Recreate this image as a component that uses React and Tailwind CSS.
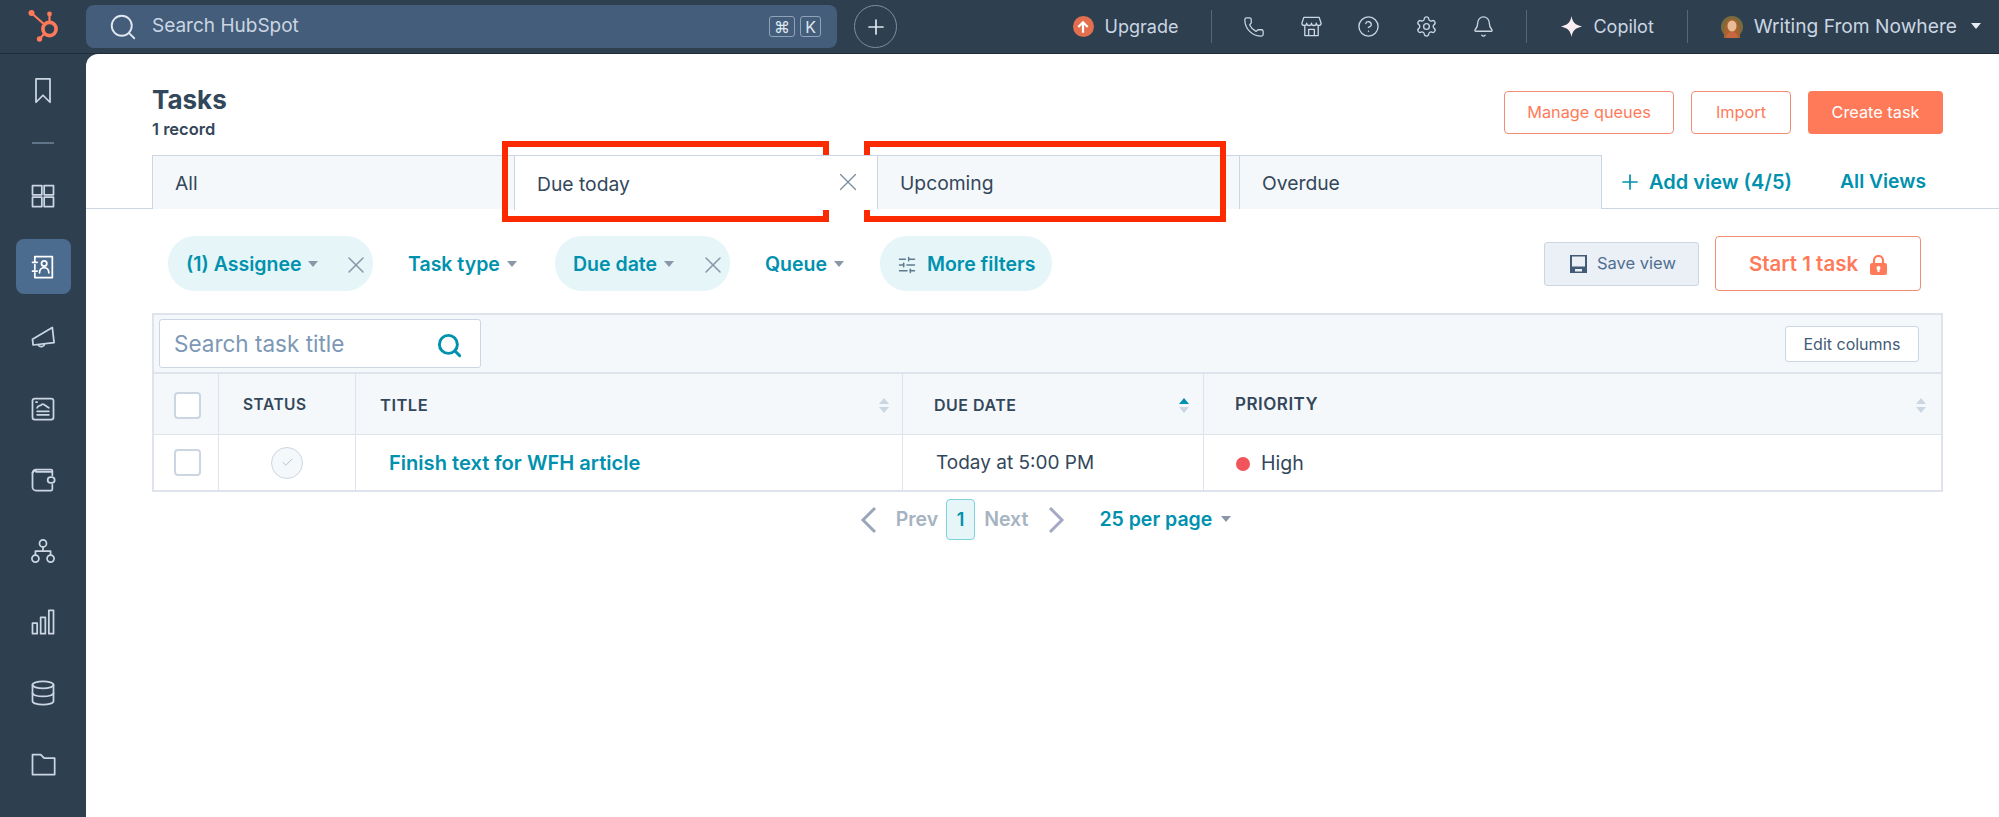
import React from "react";
import { Phone, CircleHelp, Settings, Bell, Database, Search, Plus, X, SlidersHorizontal, Check } from "lucide-react";

// small filled caret used by dropdowns
const Caret = ({ className = "border-t-[#8a97a8]" }) => (
  <span className={`block -mt-[2px] w-0 h-0 border-x-[5px] border-x-transparent border-t-[6px] ${className}`} />
);

const Glyph = ({ children, className = "w-[28px] h-[28px]", strokeWidth = 1.5 }) => (
  <svg viewBox="0 0 24 24" fill="none" stroke="currentColor" strokeWidth={strokeWidth} strokeLinejoin="round" strokeLinecap="round" className={className}>
    {children}
  </svg>
);

const SproketLogo = () => (
  <svg viewBox="0 0 32 32" className="w-[32px] h-[32px]">
    <g stroke="#ff7a59" fill="none">
      <circle cx="21.5" cy="19" r="6.6" strokeWidth="3.6" />
      <path d="M21.5 4v9M4 3.5l13 11.5M11.5 29l5.5-6" strokeWidth="2.2" />
    </g>
    <g fill="#ff7a59">
      <circle cx="3.5" cy="3" r="3" />
      <circle cx="21.5" cy="4" r="2.4" />
      <circle cx="11.5" cy="29" r="2.7" />
    </g>
  </svg>
);

const railIcons = [
  <Glyph key="grid"><rect x="3" y="3" width="8" height="8" /><rect x="13" y="3" width="8" height="8" /><rect x="3" y="13" width="8" height="8" /><rect x="13" y="13" width="8" height="8" /></Glyph>,
  <Glyph key="contacts"><path d="M5 3h15v18H5v-4M5 7V3M5 14v-4M3 8h4M3 15.5h4" /><circle cx="13" cy="9" r="2.3" /><path d="M9 17c0-6 8-6 8 0" /></Glyph>,
  <Glyph key="megaphone"><path d="M3 13 20 3l1.500 13L3.500 18zM8 18a3 3 0 0 0 5.500-1" /></Glyph>,
  <Glyph key="report"><rect x="3" y="3" width="18" height="18" rx="2" /><path d="M7 11c1-3 3-1 4-3 1-1 3 1 6 3M7 14h10M7 17h10M6 6h1" /></Glyph>,
  <Glyph key="wallet"><path d="M20 8V4a1 1 0 0 0-1-1H6a3 3 0 0 0-3 3v12a3 3 0 0 0 3 3h13a1 1 0 0 0 1-1v-4" /><path d="M3 6a3 3 0 0 1 3-2M6 5h14" /><rect x="16" y="9.5" width="6" height="5" rx="2.5" /></Glyph>,
  <Glyph key="hierarchy"><circle cx="12" cy="5.5" r="3" /><circle cx="5.5" cy="18.5" r="3" /><circle cx="18.5" cy="18.5" r="3" /><path d="M12 8.5V12M5.5 15.5V12h13v3.5" /></Glyph>,
  <Glyph key="chart"><rect x="3" y="13" width="4" height="9" /><rect x="10" y="8" width="4" height="14" /><rect x="17" y="2" width="4" height="20" /></Glyph>,
  <Database key="db" className="w-[28px] h-[28px]" strokeWidth={1.5} />,
  <Glyph key="folder"><path d="M3 4h7l3 3h9v14H3z" /></Glyph>,
];

const Rail = () => (
  <aside className="w-[86px] shrink-0 flex flex-col items-center text-[#cbd6e2]">
    <div className="h-[71px] flex items-center justify-center">
      <Glyph><path d="M6 2.500h12v20l-6-6-6 6z" /></Glyph>
    </div>
    <div className="h-[35px] flex items-center">
      <div className="w-[22px] h-[2px] bg-[#5f7488]" />
    </div>
    {railIcons.map((icon, i) => (
      <div key={i} className="h-[71px] flex items-center justify-center">
        <div className={`w-[55px] h-[55px] rounded-lg flex items-center justify-center ${i === 1 ? "bg-[#4b6b8f] text-white" : ""}`}>
          {icon}
        </div>
      </div>
    ))}
  </aside>
);

const Avatar = () => (
  <svg viewBox="0 0 22 22" className="ml-[33px] w-[22px] h-[22px]">
    <circle cx="11" cy="11" r="11" fill="#7b6a3c" />
    <path d="M3 22c0-14 3-19 8-19s8 5 8 19z" fill="#a9622f" />
    <ellipse cx="11" cy="10" rx="4.500" ry="5.500" fill="#eabb97" />
    <path d="M5 22c1-5 3-6 6-6s5 1 6 6z" fill="#c9683e" />
  </svg>
);

const TopBar = () => (
  <header className="h-[54px] shrink-0 flex items-center text-[#dfe7ef] border-b border-[#1f2c3a]">
    <div className="w-[86px] flex justify-center pl-[1px] pb-[1px]"><SproketLogo /></div>
    <div className="w-[751px] h-[43px] rounded-lg bg-[#435d7b] flex items-center pl-[22px] pr-[16px]">
      <Search className="w-[30px] h-[30px] text-[#dfe7ef]" strokeWidth={1.5} />
      <span className="ml-[14px] text-[19px] text-[#cbd6e2]">Search HubSpot</span>
      <span className="ml-auto flex gap-[5px] text-[16px]">
        <span className="w-[26px] h-[21px] flex items-center justify-center border border-[#8fa3b8] rounded-[3px]">⌘</span>
        <span className="w-[21px] h-[21px] flex items-center justify-center border border-[#8fa3b8] rounded-[3px]">K</span>
      </span>
    </div>
    <div className="ml-[17px] w-[43px] h-[43px] rounded-full border border-[#7c8fa3] flex items-center justify-center">
      <Plus className="w-[24px] h-[24px]" strokeWidth={1.7} />
    </div>

    <div className="ml-auto flex items-center text-[#cbd6e2]">
      <span className="w-[21px] h-[21px] rounded-full bg-[#e36f4f] flex items-center justify-center">
        <svg viewBox="0 0 12 12" className="w-[14px] h-[14px]" fill="none" stroke="white" strokeWidth="1.9"><path d="M6 11V2M2 6l4-4 4 4" /></svg>
      </span>
      <span className="ml-[11px] text-[18px]">Upgrade</span>
      <div className="ml-[33px] w-px h-[33px] bg-[#51677e]" />
      <div className="ml-[31px] flex items-center gap-[34.5px]">
        <Phone className="w-[22px] h-[22px]" strokeWidth={1.4} />
        <Glyph className="w-[23px] h-[23px]" strokeWidth={1.4}><path d="M4 2.500h16l2 6a2.500 2.500 0 0 1-5 0 2.500 2.500 0 0 1-5 0 2.500 2.500 0 0 1-5 0 2.500 2.500 0 0 1-5 0zM5 12v9.500h14V12M9 21.500V15h6v6.500" /></Glyph>
        <CircleHelp className="w-[23px] h-[23px]" strokeWidth={1.4} />
        <Settings className="w-[23px] h-[23px]" strokeWidth={1.4} />
        <Bell className="w-[23px] h-[23px]" strokeWidth={1.4} />
      </div>
      <div className="ml-[31px] w-px h-[33px] bg-[#51677e]" />
      <svg viewBox="0 0 20 20" className="ml-[34px] w-[21px] h-[21px]"><path d="M10 0c1 6 3.500 8.500 10 10-6.500 1.500-9 4-10 10-1-6-3.500-8.500-10-10 6.500-1.500 9-4 10-10z" fill="#fbeef2" /></svg>
      <span className="ml-[11px] text-[18px]">Copilot</span>
      <div className="ml-[33px] w-px h-[33px] bg-[#51677e]" />
      <Avatar />
      <span className="ml-[11px] text-[19.2px]">Writing From Nowhere</span>
      <span className="ml-[14px] mr-[18px]"><Caret className="border-t-[#e6ecf2]" /></span>
    </div>
  </header>
);

const OutlineBtn = ({ children, className = "" }) => (
  <button className={`h-[43px] rounded-[4px] border border-[#f08d73] text-[#ff7a59] text-[16.3px] ${className}`}>{children}</button>
);

const Tab = ({ label, className = "" }) => (
  <div className={`h-[54px] pt-[2px] border-t border-l border-[#cbd6e2] flex items-center text-[19.3px] text-[#33475b] bg-[#f5f8fa] ${className}`}>{label}</div>
);

const FilterPill = ({ label, width, closable }) => (
  <div style={{ width }} className="h-[55px] rounded-[27px] bg-[#e5f5f8] flex items-center pl-[18px] pt-[2px] text-[#0091ae] text-[19.500px] font-semibold">
    {label}
    <span className="ml-[7px]"><Caret /></span>
    {closable && <X className="ml-auto mr-[3px] w-[28px] h-[28px] text-[#8a97a8]" strokeWidth={1.3} />}
  </div>
);

const FilterLink = ({ label, className }) => (
  <div className={`flex items-center pt-[2px] text-[#0091ae] text-[19.500px] font-semibold ${className}`}>
    {label}
    <span className="ml-[7px]"><Caret /></span>
  </div>
);

const SortArrows = ({ active }) => (
  <span className="ml-auto flex flex-col gap-[3px] items-center">
    <span className={`w-0 h-0 border-x-[5px] border-x-transparent border-b-[6px] ${active ? "border-b-[#0091ae]" : "border-b-[#cbd6e2]"}`} />
    <span className="w-0 h-0 border-x-[5px] border-x-transparent border-t-[6px] border-t-[#cbd6e2]" />
  </span>
);

const HeadCell = ({ label, active, className = "", sort = true }) => (
  <div className={`h-[60px] pt-[2px] bg-[#f5f8fa] flex items-center font-semibold tracking-[0.5px] text-[#33475b] border-r border-[#dfe3eb] ${className}`}>
    {label}
    {sort && <SortArrows active={active} />}
  </div>
);

const Checkbox = () => (
  <span className="w-[27px] h-[27px] bg-white rounded-[4px] border-2 border-[#cbd6e2] block" />
);

const TaskTable = () => (
  <div className="mt-[22px] ml-[66px] mr-[56px] border-2 border-[#dfe3eb] text-[#33475b]">
    <div className="h-[59px] bg-[#f5f8fa] border-b-2 border-[#dfe3eb] flex items-center pl-[5px] pr-[22px]">
      <div className="w-[322px] h-[49px] bg-white border border-[#cbd6e2] rounded-[3px] flex items-center pl-[14px] pr-[17px]">
        <span className="text-[22.500px] text-[#7c98b6]">Search task title</span>
        <Search className="ml-auto mt-[4px] w-[27px] h-[27px] text-[#0091ae]" strokeWidth={2.6} />
      </div>
      <button className="ml-auto w-[134px] h-[36px] bg-white border border-[#cbd6e2] rounded-[3px] text-[16px] text-[#425b76]">Edit columns</button>
    </div>
    <div className="grid grid-cols-[65px_137px_547px_301px_1fr]">
      <HeadCell sort={false} label={<span className="pl-[20px]"><Checkbox /></span>} />
      <HeadCell sort={false} label="STATUS" className="pl-[24px] text-[15.5px]" />
      <HeadCell label="TITLE" className="pl-[24px] pr-[13px] text-[16.500px]" />
      <HeadCell label="DUE DATE" active className="pl-[31px] pr-[14px] text-[16px]" />
      <HeadCell label="PRIORITY" className="pl-[31px] pr-[15px] border-r-0 text-[17px]" />

      <div className="h-[56px] border-t border-r border-[#dfe3eb] flex items-center pl-[20px]"><Checkbox /></div>
      <div className="h-[56px] border-t border-r border-[#dfe3eb] flex items-center justify-center">
        <span className="w-[32px] h-[32px] rounded-full border border-[#cbd6e2] bg-[#f5f8fa] flex items-center justify-center">
          <Check className="w-[13px] h-[13px] text-[#b0bfcd]" strokeWidth={1.7} />
        </span>
      </div>
      <div className="h-[56px] pt-[2px] border-t border-r border-[#dfe3eb] flex items-center pl-[33px] text-[20.100px] font-semibold text-[#0091ae]">Finish text for WFH article</div>
      <div className="h-[56px] pt-[2px] border-t border-r border-[#dfe3eb] flex items-center pl-[33px] text-[19px]">Today at 5:00 PM</div>
      <div className="h-[56px] pt-[2px] border-t border-[#dfe3eb] flex items-center pl-[32px] text-[19.500px]">
        <span className="w-[14px] h-[14px] rounded-full bg-[#f2545b] mr-[11px]" />High
      </div>
    </div>
  </div>
);

const PageChevron = ({ d, className }) => (
  <svg viewBox="0 0 17 28" fill="none" stroke="currentColor" strokeWidth="3" className={`w-[17px] h-[28px] ${className}`}><path d={d} /></svg>
);

const Pagination = () => (
  <div className="mt-[7px] ml-[64px] mr-[58px] flex justify-center items-center h-[41px] text-[19.500px] font-semibold">
    <PageChevron d="M15 2 3 14l12 12" className="text-[#99a7b8]" />
    <span className="ml-[19px] text-[#a6b3c1]">Prev</span>
    <span className="ml-[8px] w-[29px] h-[41px] rounded-[4px] bg-[#e5f5f8] border border-[#7fd1de] text-[#0091ae] text-[18px] flex items-center justify-center">1</span>
    <span className="ml-[9px] text-[#a6b3c1]">Next</span>
    <PageChevron d="M2 2l12 12L2 26" className="ml-[20px] text-[#a5a9c6]" />
    <span className="ml-[34px] text-[#0091ae]">25 per page</span>
    <span className="ml-[9px]"><Caret /></span>
  </div>
);

// red highlight drawn over the screenshot
const Highlight = ({ className }) => (
  <div className={`absolute top-[87px] h-[81px] border-[6px] border-[#fb2a00] ${className}`} />
);

export default function App() {
  return (
    <div className="w-screen h-screen overflow-hidden bg-[#2e3f50] flex flex-col font-['Inter',sans-serif]">
      <TopBar />
      <div className="flex-1 flex min-h-0">
        <Rail />
        <main className="relative flex-1 bg-white rounded-tl-xl">
          <div className="h-[101px] pl-[66px] pr-[56px] flex justify-between">
            <div className="pt-[29px]">
              <h1 className="text-[26px] leading-[34px] font-bold text-[#33475b]">Tasks</h1>
              <p className="mt-[1px] text-[16.500px] leading-[22px] font-semibold text-[#33475b]">1 record</p>
            </div>
            <div className="pt-[37px] flex gap-[17px]">
              <OutlineBtn className="w-[170px]">Manage queues</OutlineBtn>
              <OutlineBtn className="w-[100px]">Import</OutlineBtn>
              <button className="w-[135px] h-[43px] rounded-[4px] bg-[#ff7a59] text-white text-[16.3px]">Create task</button>
            </div>
          </div>

          <div className="h-[54px] pl-[66px] pr-[56px] border-b border-[#cbd6e2] flex">
            <Tab label="All" className="w-[362px] pl-[22px]" />
            <Tab label="Due today" className="w-[363px] pl-[22px] bg-white relative z-10 h-[55px]" />
            <X className="-ml-[44px] z-10 self-center w-[30px] h-[30px] text-[#7c8fa3]" strokeWidth={1.1} />
            <span className="w-[14px]" />
            <Tab label="Upcoming" className="w-[362px] pl-[22px]" />
            <Tab label="Overdue" className="w-[363px] pl-[22px] border-r" />
            <div className="ml-[16px] flex items-center text-[#0091ae] text-[20px] font-semibold">
              <Plus className="w-[24px] h-[24px] mr-[7px]" strokeWidth={1.7} />
              Add view (4/5)
            </div>
            <div className="ml-auto mr-[17px] self-center text-[#0091ae] text-[19.300px] font-semibold">All Views</div>
          </div>

          <div className="mt-[27px] h-[55px] pl-[82px] pr-[78px] flex items-center">
            <FilterPill label="(1) Assignee" width={205} closable />
            <FilterLink label="Task type" className="ml-[35px] w-[147px]" />
            <FilterPill label="Due date" width={175} closable />
            <FilterLink label="Queue" className="ml-[35px] w-[115px]" />
            <div className="w-[172px] h-[55px] rounded-[27px] bg-[#e5f5f8] flex items-center pl-[17px] pt-[2px] text-[#0091ae] text-[19.500px] font-semibold">
              <SlidersHorizontal className="w-[20px] h-[20px] text-[#5e7c8e] mr-[10px]" strokeWidth={1.8} />
              More filters
            </div>
            <button className="ml-auto w-[155px] h-[44px] bg-[#eaf0f6] border border-[#cbd6e2] rounded-[3px] text-[16.500px] text-[#506e91] flex items-center pl-[25px]">
              <svg viewBox="0 0 17 18" className="w-[17px] h-[18px] mr-[10px]"><path d="M0 0h17v18H0z" fill="#425b76" /><path d="M2 1.500h13v10H2zM5 14h7v2.500H5z" fill="#eaf0f6" /></svg>
              Save view
            </button>
            <button className="ml-[16px] w-[206px] h-[55px] pt-[2px] border border-[#f08d73] rounded-[4px] text-[#ff7a59] text-[20.500px] font-semibold flex items-center justify-center gap-[12px]">
              Start 1 task
              <svg viewBox="0 0 17 20" className="w-[17px] h-[20px]">
                <path d="M4 9V5.500a4.500 4.500 0 0 1 9 0V9" fill="none" stroke="#ff7a59" strokeWidth="2.2" />
                <rect y="8" width="17" height="12" rx="2" fill="#ff7a59" />
                <circle cx="8.500" cy="13" r="2" fill="white" />
                <rect x="7.500" y="13" width="2" height="4" fill="white" />
              </svg>
            </button>
          </div>

          <TaskTable />
          <Pagination />

          <Highlight className="left-[416px] w-[327px]" />
          <Highlight className="left-[778px] w-[362px]" />
        </main>
      </div>
    </div>
  );
}
